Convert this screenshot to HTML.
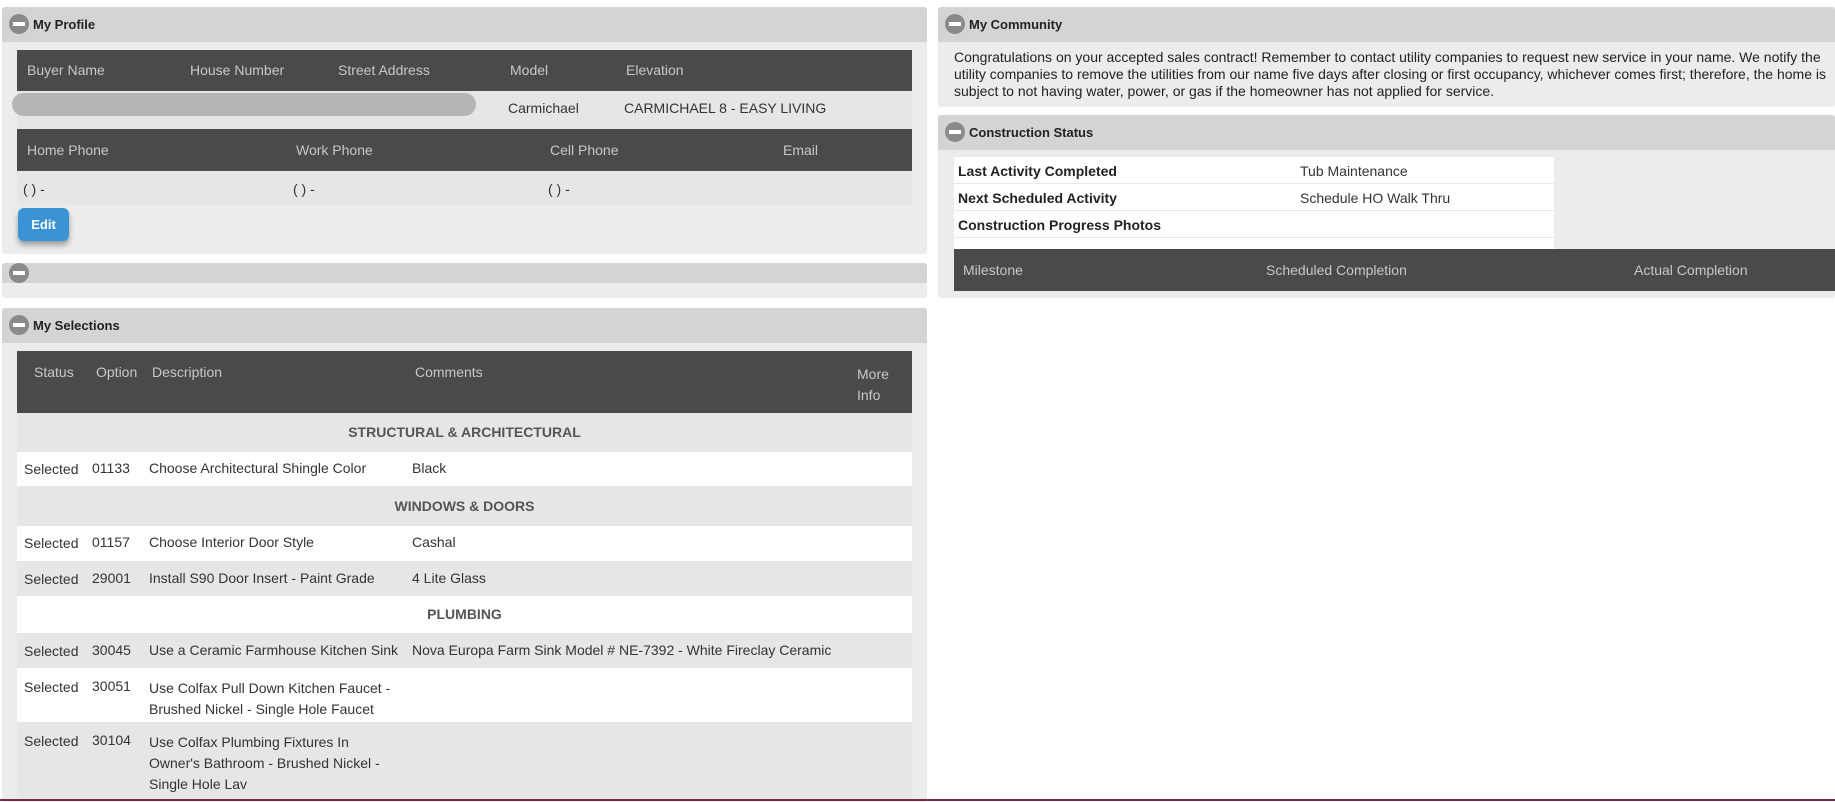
<!DOCTYPE html>
<html><head><meta charset="utf-8"><style>
*{margin:0;padding:0;box-sizing:border-box}
body{width:1835px;height:802px;background:#fff;font-family:"Liberation Sans",Arial,sans-serif;font-size:14px;color:#333;position:relative;overflow:hidden}
.a{position:absolute}
.panel{position:absolute;background:#ececec;border-radius:3px}
.ph{position:absolute;left:0;right:0;top:0;background:#d4d4d4;border-radius:3px 3px 0 0;font-weight:bold;font-size:13px;color:#222}
.ph span{position:absolute;left:31px}
.ic{position:absolute;left:7px;width:20px;height:20px;border-radius:50%;background:#8a8a8a}
.ic:after{content:"";position:absolute;left:4px;top:8px;width:12px;height:4px;background:#fff}
.dk{position:absolute;background:#4a4a4a;color:#c8c8c8}
.t{position:absolute;white-space:nowrap}
.row{position:absolute;left:17px;width:895px}
.cat{text-align:center;font-weight:bold;color:#555}
</style></head><body>

<!-- My Profile -->
<div class="panel" style="left:2px;top:7px;width:925px;height:247px">
 <div class="ph" style="height:35px"><div class="ic" style="top:7px"></div><span style="top:10px">My Profile</span></div>
</div>
<div class="dk" style="left:17px;top:50px;width:895px;height:41px"></div>
<div class="t" style="left:27px;top:62px;color:#c8c8c8">Buyer Name</div>
<div class="t" style="left:190px;top:62px;color:#c8c8c8">House Number</div>
<div class="t" style="left:338px;top:62px;color:#c8c8c8">Street Address</div>
<div class="t" style="left:510px;top:62px;color:#c8c8c8">Model</div>
<div class="t" style="left:626px;top:62px;color:#c8c8c8">Elevation</div>
<div class="a" style="left:17px;top:91px;width:895px;height:38px;background:#e6e6e6"></div>
<div class="a" style="left:12px;top:93px;width:464px;height:23px;border-radius:12px;background:#b5b5b5"></div>
<div class="t" style="left:508px;top:100px">Carmichael</div>
<div class="t" style="left:624px;top:100px">CARMICHAEL 8 - EASY LIVING</div>
<div class="dk" style="left:17px;top:129px;width:895px;height:42px"></div>
<div class="t" style="left:27px;top:142px;color:#c8c8c8">Home Phone</div>
<div class="t" style="left:296px;top:142px;color:#c8c8c8">Work Phone</div>
<div class="t" style="left:550px;top:142px;color:#c8c8c8">Cell Phone</div>
<div class="t" style="left:783px;top:142px;color:#c8c8c8">Email</div>
<div class="a" style="left:17px;top:171px;width:895px;height:34px;background:#e6e6e6"></div>
<div class="t" style="left:23px;top:181px">( ) -</div>
<div class="t" style="left:293px;top:181px">( ) -</div>
<div class="t" style="left:548px;top:181px">( ) -</div>
<div class="a" style="left:18px;top:208px;width:51px;height:33px;background:#3a93d4;border-radius:6px;box-shadow:0 4px 6px rgba(0,0,0,.35);color:#fff;font-weight:bold;font-size:13px;text-align:center;line-height:33px">Edit</div>

<!-- empty panel -->
<div class="panel" style="left:2px;top:263px;width:925px;height:35px">
 <div class="ph" style="height:20px"><div class="ic" style="top:0px"></div></div>
</div>

<!-- My Selections -->
<div class="panel" style="left:2px;top:308px;width:925px;height:494px">
 <div class="ph" style="height:35px"><div class="ic" style="top:7px"></div><span style="top:10px">My Selections</span></div>
</div>
<div class="dk" style="left:17px;top:351px;width:895px;height:62px"></div>
<div class="t" style="left:34px;top:364px;color:#c8c8c8">Status</div>
<div class="t" style="left:96px;top:364px;color:#c8c8c8">Option</div>
<div class="t" style="left:152px;top:364px;color:#c8c8c8">Description</div>
<div class="t" style="left:415px;top:364px;color:#c8c8c8">Comments</div>
<div class="t" style="left:857px;top:364px;color:#c8c8c8;line-height:21px">More<br>Info</div>

<div class="row cat" style="top:413px;height:39px;background:#e6e6e6;line-height:39px">STRUCTURAL &amp; ARCHITECTURAL</div>
<div class="row" style="top:452px;height:34px;background:#fff"></div>
<div class="t" style="left:24px;top:461px">Selected</div><div class="t" style="left:92px;top:460px">01133</div><div class="t" style="left:149px;top:460px">Choose Architectural Shingle Color</div><div class="t" style="left:412px;top:460px">Black</div>
<div class="row cat" style="top:486px;height:40px;background:#e6e6e6;line-height:40px">WINDOWS &amp; DOORS</div>
<div class="row" style="top:526px;height:35px;background:#fff"></div>
<div class="t" style="left:24px;top:535px">Selected</div><div class="t" style="left:92px;top:534px">01157</div><div class="t" style="left:149px;top:534px">Choose Interior Door Style</div><div class="t" style="left:412px;top:534px">Cashal</div>
<div class="row" style="top:561px;height:35px;background:#e6e6e6"></div>
<div class="t" style="left:24px;top:571px">Selected</div><div class="t" style="left:92px;top:570px">29001</div><div class="t" style="left:149px;top:570px">Install S90 Door Insert - Paint Grade</div><div class="t" style="left:412px;top:570px">4 Lite Glass</div>
<div class="row cat" style="top:596px;height:37px;background:#fff;line-height:37px">PLUMBING</div>
<div class="row" style="top:633px;height:35px;background:#e6e6e6"></div>
<div class="t" style="left:24px;top:643px">Selected</div><div class="t" style="left:92px;top:642px">30045</div><div class="t" style="left:149px;top:642px">Use a Ceramic Farmhouse Kitchen Sink</div><div class="t" style="left:412px;top:642px">Nova Europa Farm Sink Model # NE-7392 - White Fireclay Ceramic</div>
<div class="row" style="top:668px;height:54px;background:#fff"></div>
<div class="t" style="left:24px;top:679px">Selected</div><div class="t" style="left:92px;top:678px">30051</div><div class="t" style="left:149px;top:678px;line-height:21px">Use Colfax Pull Down Kitchen Faucet -<br>Brushed Nickel - Single Hole Faucet</div>
<div class="row" style="top:722px;height:76px;background:#e6e6e6"></div>
<div class="t" style="left:24px;top:733px">Selected</div><div class="t" style="left:92px;top:732px">30104</div><div class="t" style="left:149px;top:732px;line-height:21px">Use Colfax Plumbing Fixtures In<br>Owner's Bathroom - Brushed Nickel -<br>Single Hole Lav</div>
<div class="a" style="left:0;top:799px;width:1835px;height:2px;background:#7a2b48"></div>

<!-- My Community -->
<div class="panel" style="left:938px;top:7px;width:897px;height:100px">
 <div class="ph" style="height:35px"><div class="ic" style="top:7px"></div><span style="top:10px">My Community</span></div>
</div>
<div class="a" style="left:954px;top:49px;width:878px;font-size:14px;line-height:17px;color:#222">Congratulations on your accepted sales contract! Remember to contact utility companies to request new service in your name. We notify the utility companies to remove the utilities from our name five days after closing or first occupancy, whichever comes first; therefore, the home is subject to not having water, power, or gas if the homeowner has not applied for service.</div>

<!-- Construction Status -->
<div class="panel" style="left:938px;top:115px;width:897px;height:183px">
 <div class="ph" style="height:35px"><div class="ic" style="top:7px"></div><span style="top:10px">Construction Status</span></div>
</div>
<div class="a" style="left:954px;top:157px;width:600px;height:92px;background:#fff"></div>
<div class="a" style="left:954px;top:183px;width:600px;height:1px;background:#e8e8e8"></div>
<div class="a" style="left:954px;top:210px;width:600px;height:1px;background:#e8e8e8"></div>
<div class="a" style="left:954px;top:237px;width:600px;height:1px;background:#e8e8e8"></div>
<div class="t" style="left:958px;top:163px;font-weight:bold;color:#222">Last Activity Completed</div><div class="t" style="left:1300px;top:163px">Tub Maintenance</div>
<div class="t" style="left:958px;top:190px;font-weight:bold;color:#222">Next Scheduled Activity</div><div class="t" style="left:1300px;top:190px">Schedule HO Walk Thru</div>
<div class="t" style="left:958px;top:217px;font-weight:bold;color:#222">Construction Progress Photos</div>
<div class="dk" style="left:954px;top:249px;width:881px;height:42px"></div>
<div class="t" style="left:963px;top:262px;color:#c8c8c8">Milestone</div>
<div class="t" style="left:1266px;top:262px;color:#c8c8c8">Scheduled Completion</div>
<div class="t" style="left:1634px;top:262px;color:#c8c8c8">Actual Completion</div>
</body></html>
